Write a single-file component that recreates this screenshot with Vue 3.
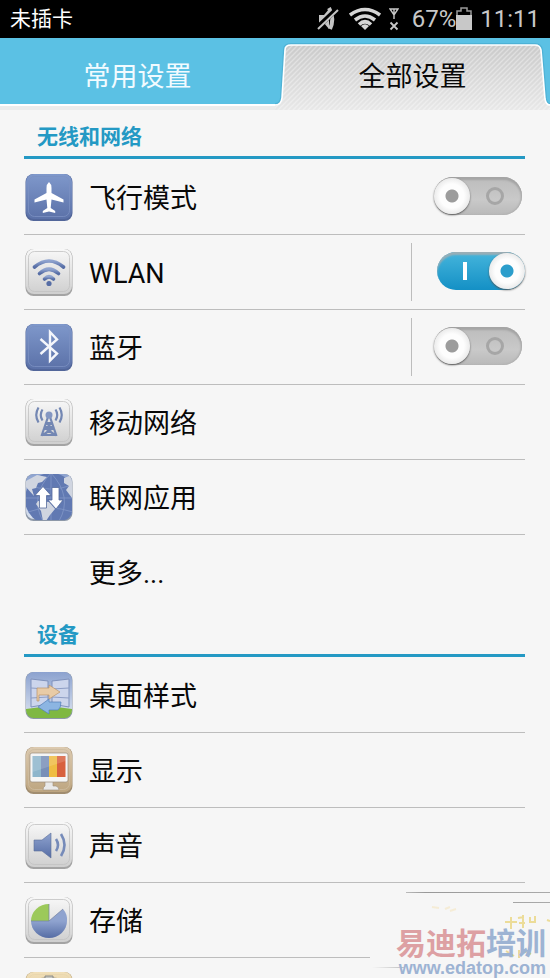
<template>
  <div class="phone">
    <!-- Status bar -->
    <header class="status-bar">
      <span class="carrier">未插卡</span>
      <div class="status-icons">
        <svg class="mute" width="22" height="24" viewBox="0 0 22 24">
          <path d="M2 8h5l5-6v20l-5-6H2z" fill="#c4c4c4" />
          <path d="M12 1q6 10 1 21" fill="none" stroke="#c4c4c4" stroke-width="4" />
          <path d="M0 21L20 2" stroke="#000" stroke-width="5" />
          <path d="M1 22L21 3" stroke="#c4c4c4" stroke-width="2" />
        </svg>
        <svg class="wifi" width="32" height="24" viewBox="0 0 32 24" fill="none" stroke="#d6d6d6" stroke-width="3.600">
          <path d="M1 8Q16-3 31 8" />
          <path d="M6 13Q16 5 26 13" />
          <path d="M10 17.500Q16 12 22 17.500" />
          <path d="M12 19Q16 15.500 20 19L16 23z" fill="#d6d6d6" stroke="none" />
        </svg>
        <svg class="no-signal" width="10" height="24" viewBox="0 0 10 24" fill="none" stroke="#c8c8c8">
          <path d="M1 2h8L5 8zM5 2v10" stroke-width="1.4" />
          <path d="M1.500 15.500l7 7m0-7l-7 7" stroke-width="1.800" />
        </svg>
        <span class="percent">67%</span>
        <svg class="battery" width="16" height="24" viewBox="0 0 16 24">
          <path d="M1 9V4h4V1h6v3h4v5" fill="none" stroke="#999" stroke-width="1.500" />
          <path d="M0 8h16v15H0z" fill="#c8c8c8" />
        </svg>
        <span class="clock">11:11</span>
      </div>
    </header>

    <!-- Tabs -->
    <nav class="tabs" role="tablist">
      <button class="tab" role="tab" aria-selected="false">常用设置</button>
      <button class="tab active" role="tab" aria-selected="true">
        <svg class="tab-shape" viewBox="0 0 275 72" preserveAspectRatio="none">
          <defs>
            <linearGradient id="tabFill" x2="0" y2="1">
              <stop offset="0" stop-color="#cacaca" />
              <stop offset="1" stop-color="#e8e8e8" />
            </linearGradient>
            <pattern id="hatch" width="5" height="5" patternUnits="userSpaceOnUse">
              <path d="M-1 6L6-1M-1 1L1-1M4 6L6 4" stroke="#fff" stroke-opacity=".35" stroke-width="1.300" />
            </pattern>
          </defs>
          <path :d="tabPath" fill="none" stroke="#3d9cc0" stroke-opacity=".4" stroke-width="4" />
          <path :d="tabPath + 'V72H0z'" fill="url(#tabFill)" />
          <path :d="tabPath + 'V72H0z'" fill="url(#hatch)" />
          <path :d="tabPath" fill="none" stroke="#fff" stroke-width="1.600" />
        </svg>
        <span>全部设置</span>
      </button>
    </nav>

    <!-- Settings -->
    <main class="settings">
      <section v-for="section in sections" :key="section.title">
        <h2 class="section-title">{{ section.title }}</h2>
        <div v-for="item in section.items" :key="item.icon" class="row">
          <svg v-if="item.icon !== 'more'" class="icon" viewBox="0 0 48 48">
            <defs>
              <linearGradient :id="'bg-' + item.icon" x2="0" y2="1">
                <stop offset="0" :stop-color="skins[item.skin][0]" />
                <stop offset="1" :stop-color="skins[item.skin][1]" />
              </linearGradient>
              <linearGradient :id="'ink-' + item.icon" x2="0" y2="1">
                <stop offset="0" stop-color="#8fa3cf" />
                <stop offset="1" stop-color="#566da5" />
              </linearGradient>
              <clipPath :id="'clip-' + item.icon">
                <rect x="1" y="1" width="46" height="46" rx="8" />
              </clipPath>
            </defs>
            <rect x=".5" y="1" width="47" height="47" rx="8" :fill="skins[item.skin][2]" />
            <rect x="1" y="1" width="46" height="45" rx="8" :fill="`url(#bg-${item.icon})`" />
            <rect
              v-if="item.skin !== 'sky'"
              x="3.500" y="3.500" width="41" height="40" rx="6"
              fill="none" :stroke="skins[item.skin][3]" stroke-width=".8"
            />

            <path
              v-if="item.icon === 'plane'"
              d="M24 9q2.500 2 2.500 6v5l12 6.500v3l-12-3-.8 8.500 4.500 3v2L24 38.500 17.800 40v-2l4.500-3-.8-8.500-12 3v-3l12-6.500v-5q0-4 2.500-6z"
              fill="#fff"
            />
            <g v-else-if="item.icon === 'wlan'" fill="none" stroke="url(#ink-wlan)" stroke-width="3.600" stroke-linecap="round">
              <path d="M9.500 19Q24 7 38.500 19" />
              <path d="M14.500 25.500Q24 17 33.500 25.500" />
              <path d="M19.500 31Q24 26.500 28.500 31" />
              <circle cx="24" cy="35.500" r="2.600" fill="#566da5" stroke="none" />
            </g>
            <path
              v-else-if="item.icon === 'bluetooth'"
              d="M15.500 16L32 30.500 25 37.500V9L32 16.500 15.500 31"
              fill="none" stroke="#f4f6fb" stroke-width="2.400"
            />
            <g v-else-if="item.icon === 'mobile'" fill="none" stroke="#7387b3" stroke-width="2.200">
              <path d="M23 19L16.500 38M25 19L31.500 38M21 25h6M20 30h8M17 37h14M21 25l7 5-10 7M27 25l-7 5 10 7" />
              <circle cx="24" cy="17" r="3.500" fill="#8497c2" stroke="none" />
              <path d="M17.500 11.500q-3.500 5.500 0 11M30.500 11.500q3.500 5.500 0 11M13.500 9.500q-4.500 7.500 0 15M34.500 9.500q4.500 7.500 0 15" />
            </g>
            <g v-else-if="item.icon === 'globe'" clip-path="url(#clip-globe)">
              <circle cx="26" cy="26" r="26" fill="#6179b2" />
              <path d="M26 0v48M0 25h48M3 12q21 8 45 0M3 39q21-8 45 0M26 0Q4 24 18 48M26 0Q48 24 34 48" fill="none" stroke="#8398c8" stroke-width=".8" />
              <path d="M1 8L12 2 22 4 17 9 13 10 11 15 7 16 9 23 1 14zM39 5l8-3v23l-6-8 3-4-5-3zM13 28l11 1 6 7-5 6-4 6h-3l-2-10-5-7z" fill="#d0d5e0" />
              <path d="M18 13.500l8 9h-4.500V35h-7V22.500H10zM31 36l-8-9h4V14.500h7V27h4z" fill="#fff" stroke="#566b9c" stroke-width=".8" />
            </g>
            <g v-else-if="item.icon === 'desktop'" clip-path="url(#clip-desktop)">
              <path d="M1 38q23-4 46 0v10H1z" fill="#7fb842" />
              <path d="M6 8l17 2v23l-17 3zM44 8l-17 2v23l17 3z" fill="#ccd5ec" stroke="#7f91bc" />
              <path d="M6 17l17 1M6 27l17-1M44 17l-17 1M44 27l-17-1" stroke="#8d9dc4" />
              <path d="M12 17h12v-3l11 7-11 7v-4H14v6h-2z" fill="#e8cba6" stroke="#b8936b" stroke-width=".7" />
              <path d="M36 31H24v-3l-11 8 11 7v-4h9q3-2 3-8z" fill="#8cb5e2" stroke="#5580b8" stroke-width=".7" />
            </g>
            <g v-else-if="item.icon === 'display'">
              <path d="M20 35h8v5h3q3 1 3 4H18q0-3 2-4z" fill="#e9e9e9" stroke="#9d8e78" stroke-width=".6" />
              <rect x="5" y="7" width="38" height="29" rx="2" fill="#f5f5f5" stroke="#9b8e7c" stroke-width=".7" />
              <path d="M7.500 10H16v21H7.500z" fill="#8eb6cc" />
              <path d="M16 10h8v21h-8z" fill="#788fb8" />
              <path d="M24 10h8v21h-8z" fill="#efbd43" />
              <path d="M32 10h8.500v21H32z" fill="#d8613e" />
              <path d="M7.500 10h33v5l-33 11z" fill="#fff" opacity=".15" />
            </g>
            <g v-else-if="item.icon === 'sound'">
              <path d="M9 19h8l9-7v25l-9-7H9z" fill="url(#ink-sound)" stroke="#5c6f98" stroke-width=".6" />
              <path d="M31 18q4 6 0 12M36 13q7 11 0 22" fill="none" stroke="#768bb9" stroke-width="2.600" />
            </g>
            <g v-else-if="item.icon === 'storage'">
              <path d="M24 25h18a18 17 0 0 1-36 0z" fill="url(#ink-storage)" />
              <path d="M24 25L38 13a18 17 0 0 1 4 12z" fill="#8fa3cf" />
              <path d="M24 25V8A18 17 0 0 0 6 25z" fill="#9cc95a" />
              <path d="M24 8v17L38 13M6 25h18" fill="none" stroke="#72819f" stroke-width=".7" />
            </g>
            <path
              v-else-if="item.icon === 'battery'"
              d="M14 9q0-2 6-2V5h8v2q6 0 6 2v30H14z"
              fill="#c6c6bf" stroke="#8b8b86"
            />
          </svg>
          <span v-else class="icon"></span>

          <label v-if="item.toggle" class="name" :for="item.icon">{{ item.name }}</label>
          <a v-else class="name" href="#">{{ item.name }}</a>

          <div v-if="item.toggle" class="toggle-area" :class="{ divided: item.divided }">
            <input :id="item.icon" v-model="item.on" class="switch" type="checkbox" />
          </div>
        </div>
      </section>
    </main>

    <!-- Site mark -->
    <div class="watermark">
      <svg class="streaks" viewBox="0 0 180 93">
        <defs>
          <linearGradient id="streak">
            <stop offset="0" stop-color="#999" stop-opacity="0" />
            <stop offset=".3" stop-color="#999" />
            <stop offset="1" stop-color="#aaa" />
          </linearGradient>
        </defs>
        <path d="M36 7h144v1H36zM143 17h37v1h-37zM2 82h32v1H2z" fill="url(#streak)" />
        <path d="M62 22l7 1M75 24l5-2m0 4l6-2" stroke="#f5ecd6" stroke-width="2" />
        <path d="M135 37h12m-6-5v12m7-11l6-1m-5 6h6m-2-8v13m7-11v5h5v-6M177 35l3 1" fill="none" stroke="#ecdc98" stroke-width="2" />
        <path d="M136 66l8 5m5-6v8m5-7l7 3" stroke="#ead99a" stroke-width="2" />
      </svg>
      <div class="brand"><span>易迪拓</span>培训</div>
      <div class="site">www.edatop.com</div>
    </div>
  </div>
</template>

<script setup>
import { reactive } from 'vue'

const tabPath = 'M0 67Q6 67 7 60L10 12Q10 7 16 7H260Q265 7 266 12L270 61Q271 67 275 67'

// top, bottom, edge, inner line
const skins = {
  blue: ['#7f98cb', '#5b71a8', '#52669a', '#7b90c2'],
  silver: ['#f8f8f8', '#cfcfcf', '#a4a4a4', '#c2c2c2'],
  sky: ['#8ca2cf', '#dbe3f0', '#8d98a8', '#8d98a8'],
  sand: ['#dccab0', '#bda580', '#a18d70', '#cdbb9f'],
  cream: ['#f1dfb8', '#cfb888', '#b9a47c', '#e8d5ab']
}

const sections = reactive([
  {
    title: '无线和网络',
    items: [
      { name: '飞行模式', icon: 'plane', skin: 'blue', toggle: true, on: false },
      { name: 'WLAN', icon: 'wlan', skin: 'silver', toggle: true, divided: true, on: true },
      { name: '蓝牙', icon: 'bluetooth', skin: 'blue', toggle: true, divided: true, on: false },
      { name: '移动网络', icon: 'mobile', skin: 'silver' },
      { name: '联网应用', icon: 'globe', skin: 'sky' },
      { name: '更多...', icon: 'more' }
    ]
  },
  {
    title: '设备',
    items: [
      { name: '桌面样式', icon: 'desktop', skin: 'sky' },
      { name: '显示', icon: 'display', skin: 'sand' },
      { name: '声音', icon: 'sound', skin: 'silver' },
      { name: '存储', icon: 'storage', skin: 'silver' },
      { name: '', icon: 'battery', skin: 'cream' }
    ]
  }
])
</script>

<style>
body {
  background: #f6f6f6;
}
</style>

<style scoped>
.phone {
  position: relative;
  display: flex;
  flex-direction: column;
  height: 100vh;
  overflow: hidden;
  background: #f6f6f6;
  font-family: Roboto, 'Noto Sans CJK SC', sans-serif;
  color: #080808;
}

/* Status bar */
.status-bar {
  display: flex;
  flex: none;
  align-items: center;
  justify-content: space-between;
  height: 38px;
  padding: 0 10px;
  background: #000;
  color: #fff;
}
.carrier {
  font-size: 21px;
  line-height: 32px;
}
.status-icons {
  display: flex;
  align-items: center;
  font-size: 24px;
  line-height: 32px;
  color: #c8c8c8;
}
.wifi {
  margin: 0 8px 0 10px;
}
.percent {
  margin-left: 13px;
}
.clock {
  margin-left: 8px;
}

/* Tabs */
.tabs {
  display: flex;
  flex: none;
  height: 72px;
  background: linear-gradient(#5bc1e4 0 66px, #fff 66px 68px, #ececec 68px);
}
.tab {
  position: relative;
  flex: 1;
  padding: 0;
  border: 0;
  background: none;
  font: inherit;
  font-size: 27px;
  color: #f2fbff;
  cursor: pointer;
}
.tab.active {
  color: #080808;
}
.tab span {
  position: relative;
}
.tab-shape {
  position: absolute;
  inset: 0;
  width: 100%;
  height: 100%;
}

/* List */
.settings {
  padding: 2px 25px 0 24px;
}
.section-title {
  box-sizing: border-box;
  height: 47px;
  margin: 0 0 1px;
  padding-left: 13px;
  border-bottom: 3px solid #2499c4;
  font-size: 21px;
  font-weight: 700;
  line-height: 50px;
  color: #2499c4;
}
.row {
  display: flex;
  align-items: center;
  box-sizing: border-box;
  height: 75px;
  border-bottom: 1px solid #bdbdbd;
}
.row:last-child {
  border-color: transparent;
}
.icon {
  flex: none;
  width: 48px;
  height: 48px;
  margin: 0 16px 0 1px;
}
.name {
  flex: 1;
  padding-top: 4px;
  font-size: 27px;
  line-height: 40px;
  color: inherit;
  text-decoration: none;
}
.toggle-area {
  display: flex;
  align-items: center;
  justify-content: flex-end;
  width: 113px;
  height: 58px;
}
.divided {
  border-left: 1px solid #bdbdbd;
}

/* Switch */
.switch {
  position: relative;
  width: 88px;
  height: 38px;
  margin: 0 3px 2px 0;
  border-radius: 19px;
  appearance: none;
  background: linear-gradient(#bcbcbc, #c9c9c9 60%, #b9b9b9);
  box-shadow: inset 0 3px 2px #a5a5a5, inset -1px 0 2px #aaa;
  cursor: pointer;
}
.switch::before {
  content: '';
  position: absolute;
  top: 1px;
  left: 0;
  width: 36px;
  height: 36px;
  border-radius: 50%;
  background: radial-gradient(circle, #9c9c9c 0 6px, #fdfdfd 7px 12px, #eee 17px);
  box-shadow: 0 1px 2px #555;
}
.switch::after {
  content: '';
  position: absolute;
  top: 10px;
  right: 18px;
  width: 12px;
  height: 12px;
  border: 3px solid #a6a6a6;
  border-radius: 50%;
}
.switch:checked {
  margin-right: 0;
  background: linear-gradient(#45b5dc, #1490c5);
  box-shadow: inset 0 3px 2px #9aaeb6;
}
.switch:checked::before {
  left: 52px;
  background: radial-gradient(circle, #2b9dcb 0 6px, #fdfdfd 7px 12px, #eee 17px);
}
.switch:checked::after {
  right: 58px;
  width: 4px;
  height: 18px;
  border: 0;
  border-radius: 0;
  background: #fff;
}

/* Site mark */
.watermark {
  position: absolute;
  right: 0;
  bottom: 0;
  box-sizing: border-box;
  width: 180px;
  height: 93px;
  padding: 43px 4px 0 0;
  background: #f6f6f6;
  text-align: right;
  font-weight: 700;
  color: #9db3d3;
  pointer-events: none;
}
.streaks {
  position: absolute;
  top: 0;
  right: 0;
  width: 180px;
  height: 93px;
}
.brand {
  position: relative;
  font-size: 30px;
  line-height: 32px;
}
.brand span {
  color: #dda0a3;
}
.site {
  position: relative;
  font-family: 'Liberation Sans', sans-serif;
  font-size: 18px;
  line-height: 16px;
}
</style>
